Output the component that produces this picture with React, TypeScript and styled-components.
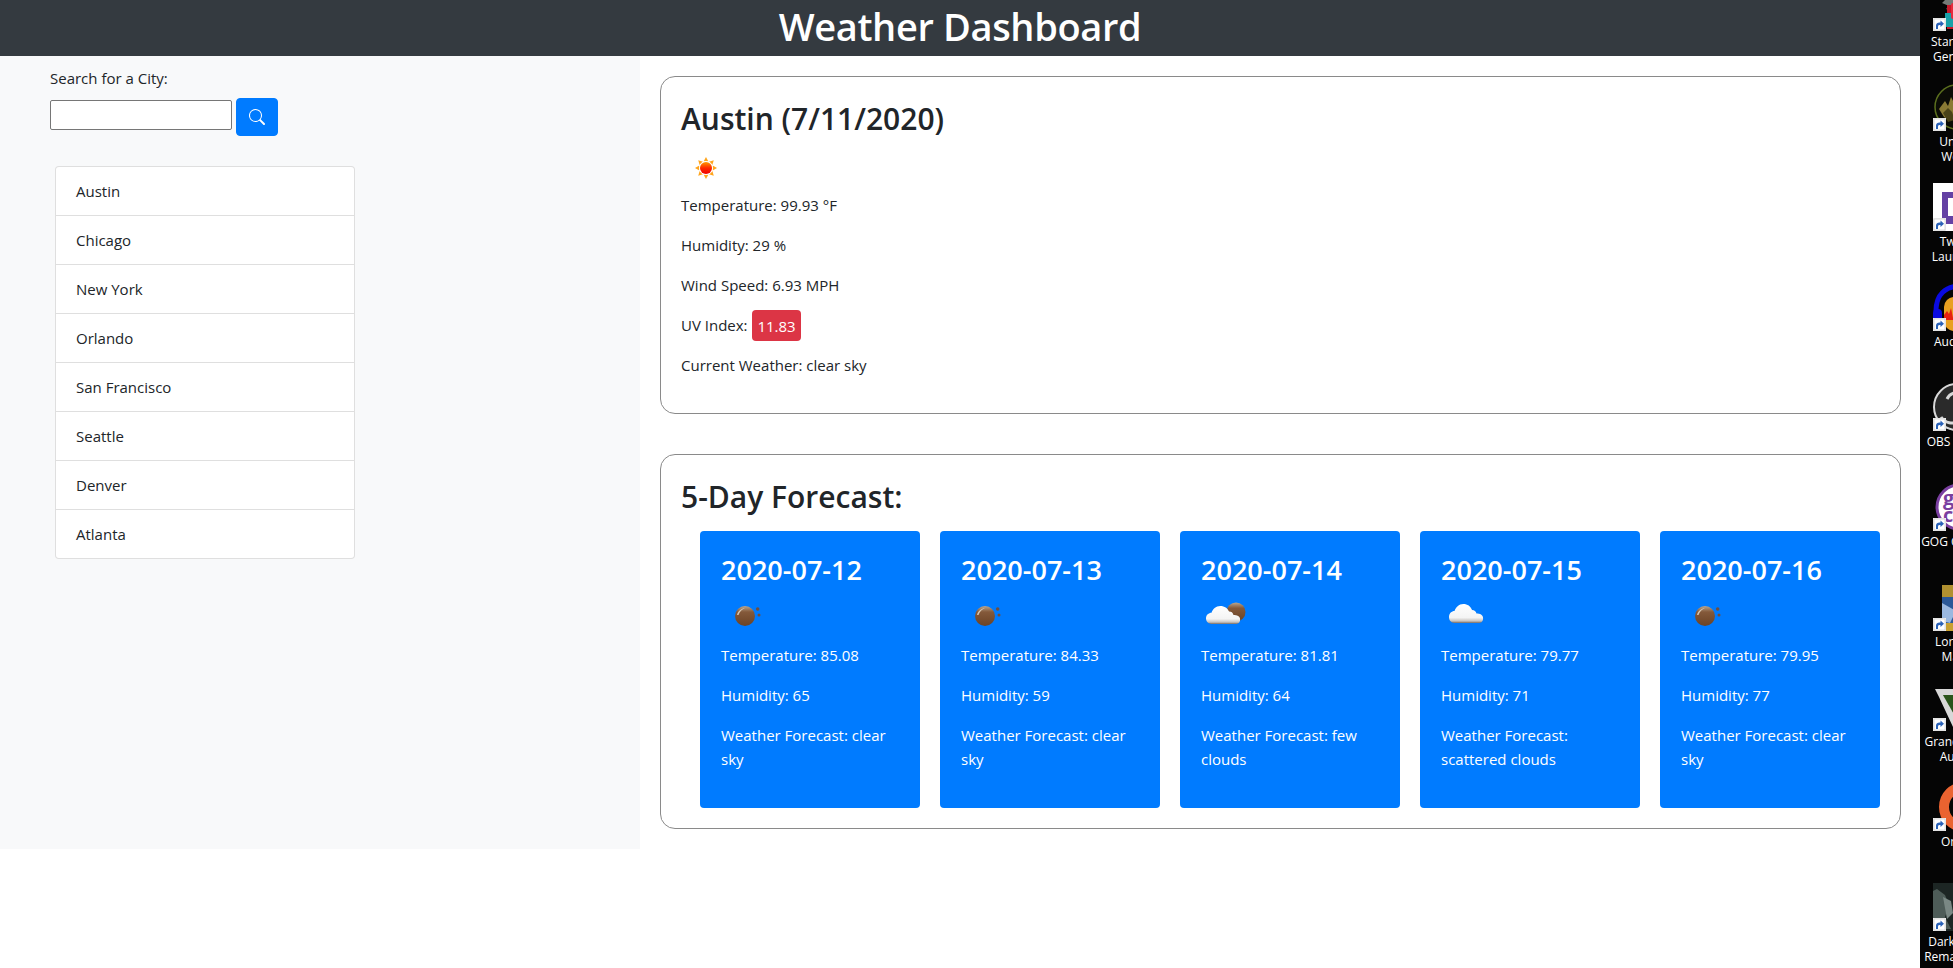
import React, { FC } from 'react';
import styled, { createGlobalStyle } from 'styled-components';
import { BsSearch } from 'react-icons/bs';

const cities = ['Austin', 'Chicago', 'New York', 'Orlando', 'San Francisco', 'Seattle', 'Denver', 'Atlanta'];

type WeatherKind = 'sun' | 'moon' | 'fewClouds' | 'cloud';

const forecast: { date: string; temp: string; humidity: string; desc: string; icon: WeatherKind }[] = [
	{ date: '2020-07-12', temp: '85.08', humidity: '65', desc: 'clear sky', icon: 'moon' },
	{ date: '2020-07-13', temp: '84.33', humidity: '59', desc: 'clear sky', icon: 'moon' },
	{ date: '2020-07-14', temp: '81.81', humidity: '64', desc: 'few clouds', icon: 'fewClouds' },
	{ date: '2020-07-15', temp: '79.77', humidity: '71', desc: 'scattered clouds', icon: 'cloud' },
	{ date: '2020-07-16', temp: '79.95', humidity: '77', desc: 'clear sky', icon: 'moon' },
];

const desktopIcons: { kind: string; lines: string[] }[] = [
	{ kind: 'star', lines: ['Star Wars', 'Generals'] },
	{ kind: 'unreal', lines: ['Unreal', 'World'] },
	{ kind: 'twitch', lines: ['Twitch', 'Launcher'] },
	{ kind: 'audacity', lines: ['Audacity'] },
	{ kind: 'obs', lines: ['OBS Studio'] },
	{ kind: 'gog', lines: ['GOG GALAXY'] },
	{ kind: 'lords', lines: ['Lords of', 'Magic'] },
	{ kind: 'gta', lines: ['Grand Theft', 'Auto V'] },
	{ kind: 'origin', lines: ['Origin'] },
	{ kind: 'dark', lines: ['Dark Souls', 'Remastered'] },
];

const cloudPath =
	'M7 35c-3.500 0-5-2.500-5-5 0-3 2.500-5 5-5 1-3 4-6 8-6s6.500 2 8 5c2 0 3.500 1 4 3 3 0 6 1 6 4 0 3-2 4-4 4z';

const WeatherIcon: FC<{ kind: WeatherKind }> = ({ kind }) => (
	<IconFrame viewBox="0 0 50 50">
		<defs>
			<linearGradient id={`sun-${kind}`} x1="0" y1="0" x2="0" y2="1">
				<stop offset="0" stopColor="#ff9a00" />
				<stop offset="0.5" stopColor="#ff2a00" />
				<stop offset="1" stopColor="#f00000" />
			</linearGradient>
			<linearGradient id={`moon-${kind}`} x1="0" y1="0" x2="0" y2="1">
				<stop offset="0" stopColor="#b9a68e" />
				<stop offset="0.3" stopColor="#84593a" />
				<stop offset="1" stopColor="#6a4326" />
			</linearGradient>
			<linearGradient id={`cloud-${kind}`} x1="0" y1="0" x2="0" y2="1">
				<stop offset="0" stopColor="#ffffff" />
				<stop offset="0.72" stopColor="#f4f4f4" />
				<stop offset="0.9" stopColor="#c8c4c0" />
				<stop offset="1" stopColor="#7c6f66" />
			</linearGradient>
		</defs>
		{kind === 'sun' && (
			<g>
				{[0, 45, 90, 135, 180, 225, 270, 315].map((a) => (
					<polygon key={a} points="25,14 22.6,18.4 27.4,18.4" fill="#ffa51c" transform={`rotate(${a} 25 25)`} />
				))}
				<circle cx="25" cy="25" r="7" fill="#fff" />
				<circle cx="25" cy="25" r="6" fill={`url(#sun-${kind})`} />
			</g>
		)}
		{kind === 'moon' && (
			<g>
				<circle cx="24" cy="23" r="10" fill={`url(#moon-${kind})`} />
				<path d="M16 22c1-4 4-6.500 8-7-3 1.500-5.500 3.500-6.500 7z" fill="#d8c8b4" />
				<circle cx="36.700" cy="16" r="1.800" fill="#6f5040" />
				<circle cx="38" cy="22" r="1.500" fill="#6f5040" />
			</g>
		)}
		{kind === 'fewClouds' && (
			<g>
				<circle cx="35" cy="19" r="9.500" fill={`url(#moon-${kind})`} />
				<path d={cloudPath} fill={`url(#cloud-${kind})`} transform="translate(5 13) scale(1.100 1.120) translate(-2 -19)" />
			</g>
		)}
		{kind === 'cloud' && (
			<path d={cloudPath} fill={`url(#cloud-${kind})`} transform="translate(8 11) scale(1.100 1.180) translate(-2 -19)" />
		)}
	</IconFrame>
);

// only the left third of these shows, the rest is off the edge of the screen
const DesktopGlyph: FC<{ kind: string }> = ({ kind }) => {
	switch (kind) {
		case 'star':
			return (
				<g>
					<path d="M4 4l4 3-3 3 5 2-4 3 6 2-3 3 7 3-3 3 9 3V0H4z" fill="#8a8f8c" opacity="0.85" />
					<rect x="14" y="22" width="34" height="24" fill="#c8182a" />
					<rect x="12" y="30" width="10" height="14" fill="#18a0a8" />
					<rect x="18" y="20" width="10" height="16" rx="2" fill="#e82a3c" />
				</g>
			);
		case 'unreal':
			return (
				<g>
					<circle cx="24" cy="24" r="22" fill="#0b0c06" stroke="#5b6f1e" strokeWidth="1.500" />
					<path d="M6 26l6-8 3 5 3-9 4 8v12l-5 4-6-4z" fill="#8a7a34" />
					<path d="M10 30l5-5 4 4 3 8-7 2z" fill="#4a4318" />
				</g>
			);
		case 'twitch':
			return (
				<g>
					<rect width="48" height="48" fill="#fff" />
					<path d="M9 9h34v24l-8 8h-9l-6 6v-6H9z" fill="#6441a4" />
					<rect x="15" y="15" width="25" height="18" fill="#fff" />
				</g>
			);
		case 'audacity':
			return (
				<g>
					<path d="M3 28C3 12 12 3 28 3s25 9 25 25" fill="none" stroke="#0a0ae0" strokeWidth="5" />
					<rect x="0" y="26" width="9" height="20" rx="4" fill="#0a0ae0" />
					<rect x="11" y="14" width="40" height="34" rx="10" fill="#e8a020" />
					<path d="M11 32l3-4 2 3 2-6 2 10 2-7 2 3 4-2v8H11z" fill="#e82010" />
				</g>
			);
		case 'obs':
			return (
				<g>
					<circle cx="24" cy="24" r="23" fill="#2a2a2a" stroke="#d8d8d8" strokeWidth="2" />
					<path d="M14 16c3-6 10-8 14-4" fill="none" stroke="#d8d8d8" strokeWidth="3" />
					<path d="M8 34c4 6 12 8 18 4" fill="none" stroke="#d8d8d8" strokeWidth="3" />
				</g>
			);
		case 'gog':
			return (
				<g>
					<circle cx="26" cy="24" r="22" fill="#fff" stroke="#7a3fa0" strokeWidth="3" />
					<GogLetter x="10" y="22">g</GogLetter>
					<GogLetter x="10" y="39">c</GogLetter>
				</g>
			);
		case 'lords':
			return (
				<g>
					<rect x="9" y="2" width="36" height="46" fill="#2a5898" />
					<rect x="9" y="2" width="36" height="12" fill="#b09030" />
					<path d="M9 20l14 8-6 12-8-2z" fill="#9ab8e0" />
					<rect x="9" y="40" width="36" height="8" fill="#c8a030" />
				</g>
			);
		case 'gta':
			return (
				<g>
					<path d="M2 6h46v6L24 44h-4L6 14z" fill="#d8d8d8" />
					<path d="M10 12h38L26 40z" fill="#3a7a22" />
					<path d="M10 12l16 28V12z" fill="#101010" opacity="0.35" />
				</g>
			);
		case 'origin':
			return <circle cx="31" cy="24" r="20" fill="none" stroke="#ea6330" strokeWidth="10" />;
		default:
			return (
				<g>
					<rect width="48" height="48" fill="#1d2624" />
					<path d="M4 6l8 6 4 10-4 12 6 12H0V8z" fill="#4e5c58" />
					<path d="M10 14l8 4 2 12-6 6z" fill="#7a8884" />
				</g>
			);
	}
};

const ShortcutBadge = () => (
	<BadgeFrame viewBox="0 0 13 13">
		<rect width="13" height="13" fill="#f2f2f2" />
		<rect x="1" y="1" width="11" height="11" fill="#fff" stroke="#b8b8b8" strokeWidth="0.500" />
		<path d="M3 11V7.500C3 5.500 4.500 4.500 6.500 4.500H7.500V2.500L11 5.700 7.500 8.900V7H6.500C5.300 7 5 7.800 5 9v2z" fill="#2a62b8" />
	</BadgeFrame>
);

const App = () => (
	<>
		<GlobalStyle />
		<Page>
			<Main>
				<Header>
					<Title>Weather Dashboard</Title>
				</Header>
				<Content>
					<Sidebar>
						<SearchLabel>Search for a City:</SearchLabel>
						<SearchRow>
							<SearchInput type="text" />
							<SearchButton type="button" aria-label="Search">
								<BsSearch size={16} />
							</SearchButton>
						</SearchRow>
						<CityList>
							{cities.map((city) => (
								<CityItem key={city}>{city}</CityItem>
							))}
						</CityList>
					</Sidebar>
					<Results>
						<Panel>
							<PanelTitle>Austin (7/11/2020)</PanelTitle>
							<WeatherIcon kind="sun" />
							<Line>Temperature: 99.93 °F</Line>
							<Line>Humidity: 29 %</Line>
							<Line>Wind Speed: 6.93 MPH</Line>
							<Line>
								UV Index: <UvBadge>11.83</UvBadge>
							</Line>
							<Line>Current Weather: clear sky</Line>
						</Panel>
						<Panel>
							<PanelTitle>5-Day Forecast:</PanelTitle>
							<ForecastRow>
								{forecast.map((day) => (
									<ForecastCard key={day.date}>
										<CardDate>{day.date}</CardDate>
										<WeatherIcon kind={day.icon} />
										<Line>Temperature: {day.temp}</Line>
										<Line>Humidity: {day.humidity}</Line>
										<Line>Weather Forecast: {day.desc}</Line>
									</ForecastCard>
								))}
							</ForecastRow>
						</Panel>
					</Results>
				</Content>
			</Main>
			<DesktopStrip>
				{desktopIcons.map((item) => (
					<DesktopItem key={item.kind}>
						<DesktopIcon>
							<svg width="48" height="48" viewBox="0 0 48 48">
								<DesktopGlyph kind={item.kind} />
							</svg>
							<ShortcutBadge />
						</DesktopIcon>
						{item.lines.map((line) => (
							<DesktopLabel key={line}>{line}</DesktopLabel>
						))}
					</DesktopItem>
				))}
			</DesktopStrip>
		</Page>
	</>
);

const GlobalStyle = createGlobalStyle`
	html, body {
		margin: 0;
		background: #fff;
	}
	body {
		font-family: 'Open Sans', 'Noto Sans', sans-serif;
		font-size: 15px;
		line-height: 24px;
		color: #212529;
	}
	* {
		box-sizing: border-box;
	}
`;

const Page = styled.div`
	display: flex;
	width: 1953px;
	height: 968px;
	overflow: hidden;
`;

const Main = styled.div`
	width: 1920px;
	flex: none;
`;

const Header = styled.header`
	height: 56px;
	padding-bottom: 4px;
	background: #343a40;
	display: flex;
	justify-content: center;
	align-items: center;
`;

const Title = styled.h1`
	margin: 0;
	font-size: 38px;
	line-height: 48px;
	font-weight: 600;
	color: #fff;
	letter-spacing: -0.35px;
`;

const Content = styled.div`
	display: flex;
	align-items: flex-start;
`;

const Sidebar = styled.aside`
	width: 640px;
	height: 793px;
	flex: none;
	background: #f8f9fa;
	padding: 10px 0 0 50px;
`;

const SearchLabel = styled.div`
	height: 24px;
	margin-bottom: 8px;
`;

const SearchRow = styled.div`
	display: flex;
	align-items: flex-start;
	gap: 4px;
`;

const SearchInput = styled.input`
	width: 182px;
	height: 30px;
	margin-top: 2px;
	padding: 1px 2px;
	background: #fff;
	border: 1px solid #767676;
	border-radius: 2px;
`;

const SearchButton = styled.button`
	width: 42px;
	height: 38px;
	padding: 0;
	display: flex;
	align-items: center;
	justify-content: center;
	background: #007bff;
	color: #fff;
	border: 1px solid #007bff;
	border-radius: 4px;
`;

const CityList = styled.ul`
	width: 300px;
	margin: 30px 0 0 5px;
	padding: 0;
	list-style: none;
	background: #fff;
	border: 1px solid rgba(0, 0, 0, 0.125);
	border-radius: 4px;
`;

const CityItem = styled.li`
	height: 48px;
	padding: 12px 20px;
	& + & {
		height: 49px;
		border-top: 1px solid rgba(0, 0, 0, 0.125);
	}
`;

const Results = styled.main`
	flex: 1;
	padding: 20px 20px 0;
	display: flex;
	flex-direction: column;
	gap: 40px;
`;

const Panel = styled.section`
	border: 1px solid #8a8a8a;
	border-radius: 15px;
	padding: 20px;
`;

const PanelTitle = styled.h2`
	margin: 0 0 5px;
	padding-top: 3px;
	font-size: 30px;
	line-height: 38.4px;
	font-weight: 600;
`;

const IconFrame = styled.svg`
	display: block;
	width: 50px;
	height: 50px;
`;

const Line = styled.p`
	margin: 0 0 16px;
	line-height: 24px;
`;

const UvBadge = styled.span`
	padding: 5.5px 5px;
	margin-left: 1px;
	background: #dc3545;
	color: #fff;
	border-radius: 4px;
`;

const ForecastRow = styled.div`
	display: flex;
	gap: 20px;
	margin: 14px 0 0 19px;
`;

const ForecastCard = styled.div`
	width: 220px;
	height: 277px;
	padding: 20px 20px 20px 21px;
	background: #007bff;
	color: #fff;
	border-radius: 4px;
`;

const CardDate = styled.h3`
	margin: 0 0 7px;
	padding-top: 2px;
	font-size: 27px;
	line-height: 33.6px;
	font-weight: 600;
`;

const GogLetter = styled.text`
	font-family: 'Open Sans', sans-serif;
	font-size: 20px;
	font-weight: 700;
	fill: #7a3fa0;
`;

const DesktopStrip = styled.div`
	width: 33px;
	flex: none;
	height: 968px;
	overflow: hidden;
	background: #050505;
`;

const DesktopItem = styled.div`
	width: 76px;
	height: 100px;
	&:first-child {
		margin-top: -17px;
	}
`;

const DesktopIcon = styled.div`
	position: relative;
	width: 48px;
	height: 48px;
	margin: 0 0 3px 13px;
`;

const BadgeFrame = styled.svg`
	position: absolute;
	left: 0;
	bottom: 0;
	width: 13px;
	height: 13px;
`;

const DesktopLabel = styled.div`
	font-size: 12px;
	line-height: 15px;
	text-align: center;
	color: #fff;
	white-space: nowrap;
`;

export default App;
